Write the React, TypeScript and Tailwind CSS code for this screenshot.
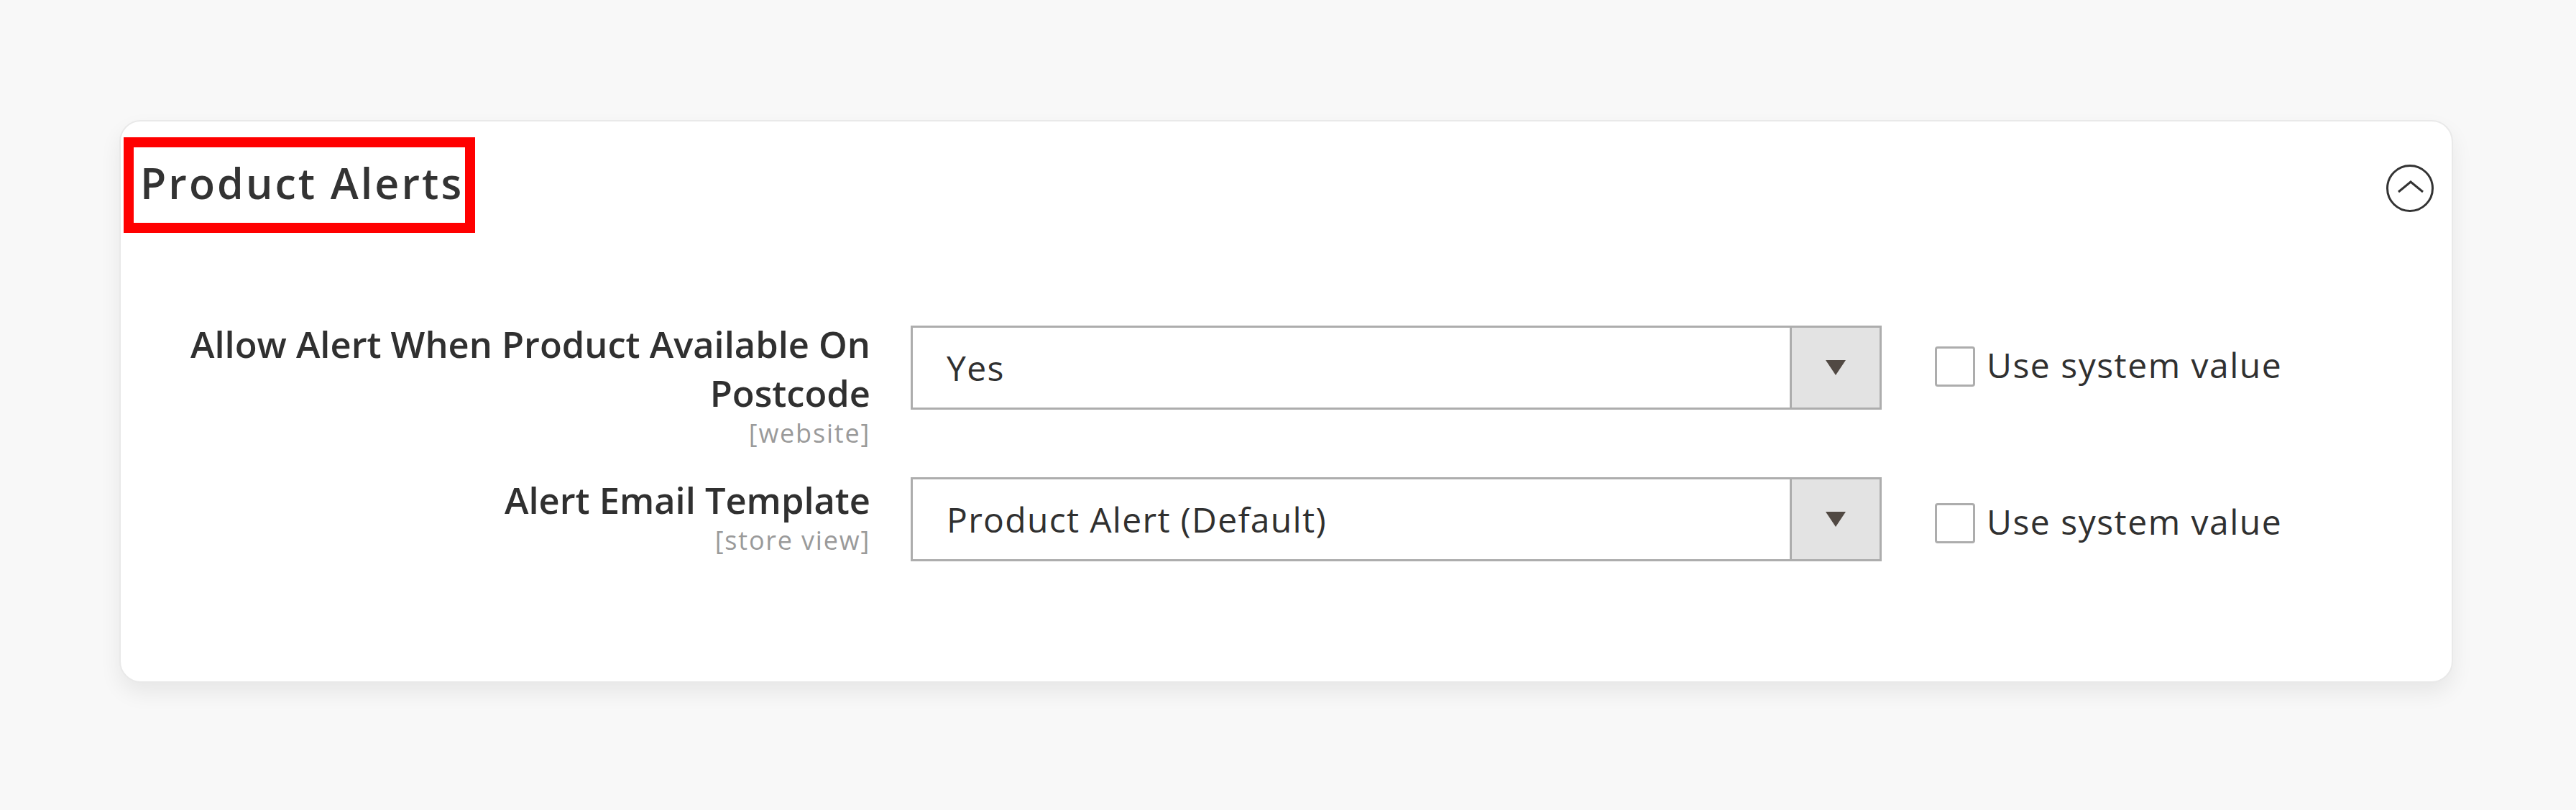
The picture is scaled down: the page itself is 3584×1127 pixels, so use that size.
import React from "react";

const font = { fontFamily: '"Open Sans", "Noto Sans", sans-serif' };

function Caret() {
  return (
    <svg width="28" height="21" viewBox="0 0 28 21" aria-hidden="true">
      <polygon points="0,0 28,0 14,21" fill="#514943" />
    </svg>
  );
}

function CollapseIcon() {
  return (
    <svg width="66" height="66" viewBox="0 0 66 66" aria-hidden="true">
      <circle cx="33" cy="33" r="31.5" fill="none" stroke="#333333" strokeWidth="3" />
      <polyline
        points="17,38 34,24 51,38"
        fill="none"
        stroke="#333333"
        strokeWidth="3"
        strokeLinejoin="miter"
      />
    </svg>
  );
}

function Select({ value }: { value: string }) {
  return (
    <div className="flex h-[117px] w-[1351px] border-[3px] border-[#adadad] bg-white">
      <div className="flex flex-1 items-center pl-[47px] text-[48px] leading-normal tracking-[1.3px] text-[#303030]">
        {value}
      </div>
      <div className="flex w-[125px] items-center justify-center border-l-[3px] border-[#adadad] bg-[#e3e3e3]">
        <Caret />
      </div>
    </div>
  );
}

function SystemValue({ boxTop }: { boxTop: string }) {
  return (
    <div className={`ml-[74px] flex items-start ${boxTop}`}>
      <div className="h-[56px] w-[56px] rounded-[4px] border-[3px] border-[#adadad] bg-white" />
      <div className="ml-[16px] -mt-[10px] text-[48px] leading-normal tracking-[1.5px] text-[#303030]">
        Use system value
      </div>
    </div>
  );
}

export default function App() {
  return (
    <div
      className="h-[1127px] w-[3584px] overflow-hidden bg-[#f8f8f8] pl-[166px] pt-[167px]"
      style={font}
    >
      <div className="h-[783px] w-[3247px] rounded-[30px] border-2 border-[#e9e9e9] bg-white shadow-[0_14px_30px_rgba(0,0,0,0.07)]">
        <div className="flex items-start justify-between pl-[4px] pr-[25px] pt-[22px]">
          <div className="h-[133px] w-[489px] border-[14px] border-[#ff0000] pl-[9px] pt-[9px]">
            <h2 className="whitespace-nowrap text-[59px] font-semibold leading-[80px] tracking-[3.1px] text-[#333333]">
              Product Alerts
            </h2>
          </div>
          <div className="mt-[38px]">
            <CollapseIcon />
          </div>
        </div>

        <div className="mt-[129px] flex flex-col">
          <div className="flex h-[211px] items-start">
            <div className="-mt-[8px] w-[1043px] text-right">
              <div className="text-[50.6px] font-semibold leading-[68px] text-[#303030]">
                Allow Alert When Product Available On Postcode
              </div>
              <div className="text-[36px] leading-[44px] tracking-[1.8px] text-[#9a9a9a]">
                [website]
              </div>
            </div>
            <div className="ml-[56px]">
              <Select value="Yes" />
            </div>
            <SystemValue boxTop="mt-[29px]" />
          </div>

          <div className="flex items-start">
            <div className="-mt-[2px] w-[1043px] text-right">
              <div className="text-[50.6px] font-semibold leading-[68px] text-[#303030]">
                Alert Email Template
              </div>
              <div className="text-[36px] leading-[44px] tracking-[1.8px] text-[#9a9a9a]">
                [store view]
              </div>
            </div>
            <div className="ml-[56px]">
              <Select value="Product Alert (Default)" />
            </div>
            <SystemValue boxTop="mt-[36px]" />
          </div>
        </div>
      </div>
    </div>
  );
}
